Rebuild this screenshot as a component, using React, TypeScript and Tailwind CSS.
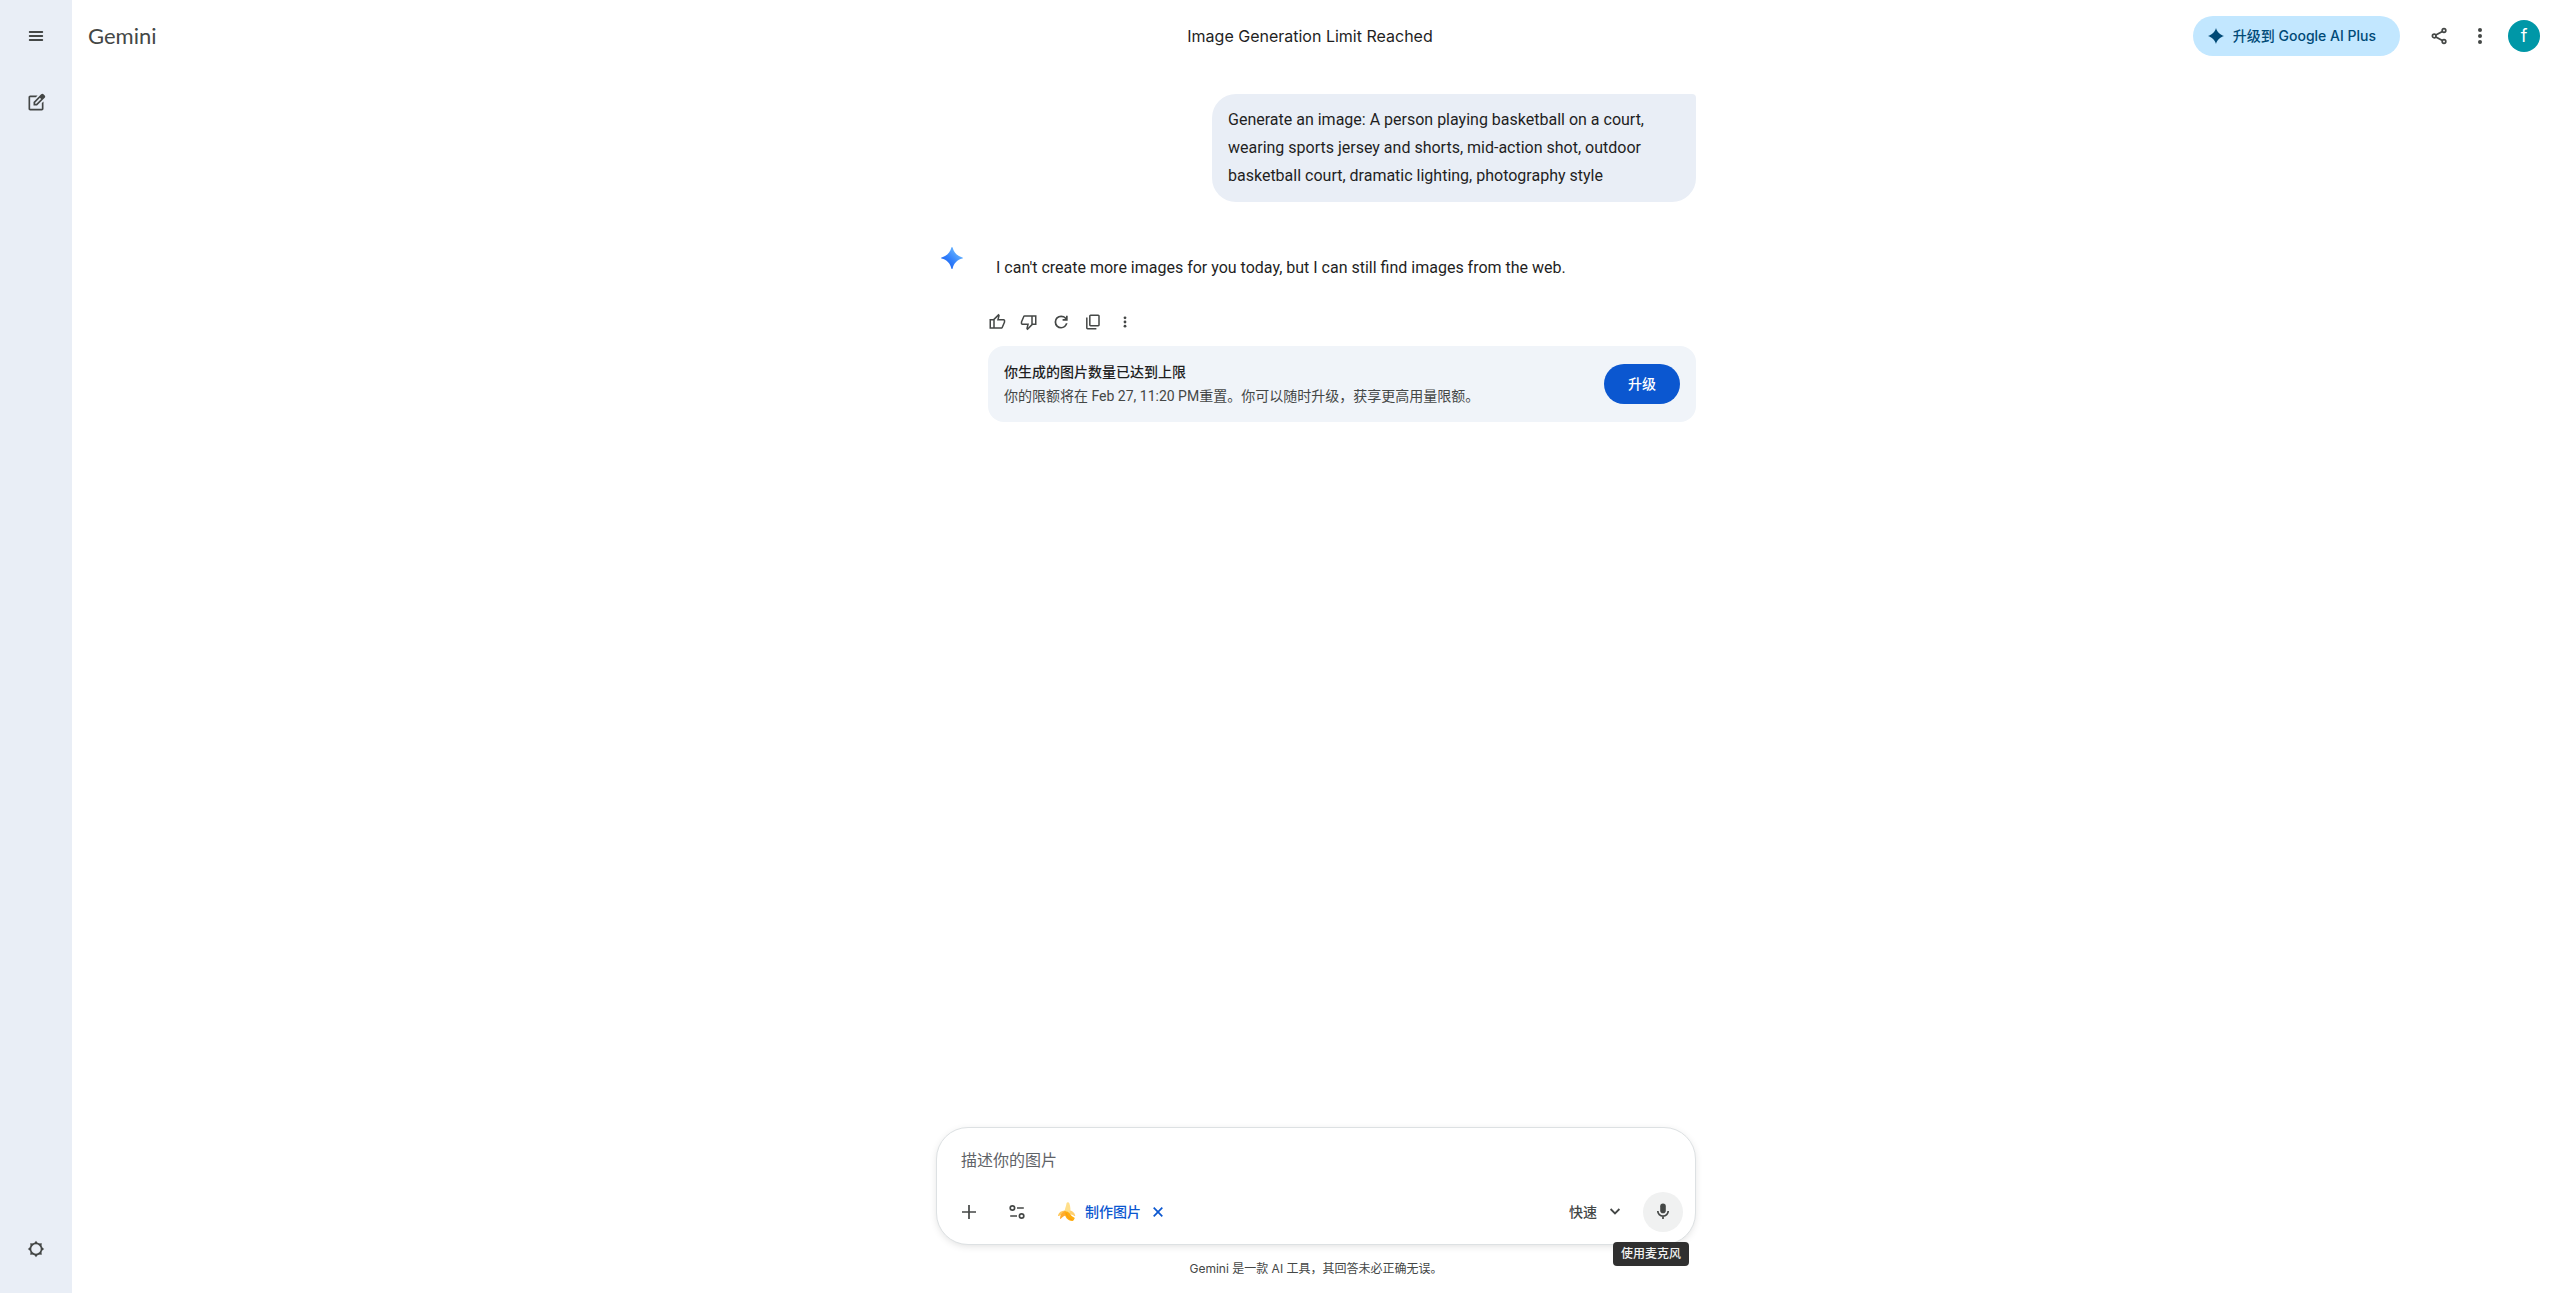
import { useState } from "react";
import type { ReactNode } from "react";

/* ── Icons ── */

function Symbol({ d, className }: { d: string; className: string }) {
  return (
    <svg viewBox="0 -960 960 960" fill="currentColor" className={className} aria-hidden="true">
      <path d={d} />
    </svg>
  );
}

const THUMB_UP =
  "M720-120H280v-520l280-280 50 50q7 7 11.5 19t4.5 23v14l-44 174h258q32 0 56 24t24 56v80q0 7-2 15t-4 15L794-168q-9 20-30 34t-44 14Zm-360-80h360l120-280v-80H480l54-220-174 174v406Zm-80-440v80H160v360h120v80H80v-520h200Z";
const THUMB_DOWN =
  "M240-840h440v520L400-40l-50-50q-7-7-11.5-19t-4.5-23v-14l44-174H120q-32 0-56-24t-24-56v-80q0-7 2-15t4-15l120-282q9-20 30-34t44-14Zm360 80H240L120-480v80h360l-54 220 174-174v-406Zm80 440v-80h120v-360H680v-80h200v520H680Z";
const REFRESH =
  "M486-130q-146 0-248-102T136-480q0-146 102-248t248-102q80 0 146 31t114 85v-106h90v270H566v-90h130q-36-48-90-74t-120-26q-108 0-183 76t-75 184q0 108 75 184t183 76q88 0 157-52t93-138h93q-26 122-122 201t-221 79Z";
const COPY =
  "M350-240q-33 0-56.5-23.5T270-320v-480q0-33 23.5-56.5T350-880h410q33 0 56.5 23.5T840-800v480q0 33-23.5 56.5T760-240H350Zm0-80h410v-480H350v480ZM190-80q-33 0-56.5-23.5T110-160v-560h80v560h470v80H190Z";
const EDIT_SQUARE =
  "M200-120q-33 0-56.5-23.5T120-200v-560q0-33 23.5-56.5T200-840h357l-80 80H200v560h560v-278l80-80v358q0 33-23.5 56.5T760-120H200ZM360-360v-170l367-367q12-12 27-18t30-6q16 0 30.5 6t26.5 18l56 57q11 12 17 26.5t6 29.5q0 15-5.5 29.5T897-728L530-360H360ZM440-440h56l232-232-28-28-29-28-231 231v57Z";

function MenuIcon() {
  return (
    <svg viewBox="0 0 20 20" stroke="currentColor" strokeWidth="1.8" strokeLinecap="round" className="size-5" aria-hidden="true">
      <path d="M3.7 6h12.6M3.7 10h12.6M3.7 14h12.6" />
    </svg>
  );
}

function GearIcon() {
  return (
    <svg viewBox="0 0 20 20" fill="none" className="size-5" aria-hidden="true">
      <circle cx="10" cy="10" r="5.6" stroke="currentColor" strokeWidth="1.7" />
      <path
        fill="currentColor"
        d="M10 1.8l1.8 2.4H8.2zM10 18.2l1.8-2.4H8.2zM1.8 10l2.4-1.8v3.6zM18.2 10l-2.4-1.8v3.6zM4.2 4.2l3 .4-2.6 2.6zM15.8 4.2l-3 .4 2.6 2.6zM4.2 15.8l3-.4-2.6-2.6zM15.8 15.8l-3-.4 2.6-2.6z"
      />
    </svg>
  );
}

function ShareIcon() {
  return (
    <svg viewBox="0 0 20 20" fill="none" stroke="currentColor" strokeWidth="1.7" className="size-5" aria-hidden="true">
      <circle cx="4.2" cy="10" r="1.8" />
      <circle cx="14" cy="4.5" r="1.8" />
      <circle cx="14" cy="15.5" r="1.8" />
      <path d="M5.8 9.1l6.6-3.7M5.8 10.9l6.6 3.7" />
    </svg>
  );
}

function MoreIcon({ className }: { className: string }) {
  return (
    <svg viewBox="0 0 20 20" fill="currentColor" className={className} aria-hidden="true">
      <circle cx="10" cy="4" r="2" />
      <circle cx="10" cy="10" r="2" />
      <circle cx="10" cy="16" r="2" />
    </svg>
  );
}

function SparkIcon({ className }: { className: string }) {
  return (
    <svg viewBox="0 0 22 22" fill="currentColor" className={className} aria-hidden="true">
      <path d="M11 0C12.4 5.2 16.8 9.6 22 11 16.8 12.4 12.4 16.8 11 22 9.6 16.8 5.2 12.4 0 11 5.2 9.6 9.6 5.2 11 0z" />
    </svg>
  );
}

function GeminiSpark() {
  return (
    <svg viewBox="0 0 22 22" className="size-[22px]" aria-hidden="true">
      <defs>
        <linearGradient id="spark" x1="3" y1="18" x2="17" y2="3" gradientUnits="userSpaceOnUse">
          <stop offset="0" stopColor="#1c62f0" />
          <stop offset="0.45" stopColor="#3483fc" />
          <stop offset="1" stopColor="#6bb8ff" />
        </linearGradient>
      </defs>
      <path
        fill="url(#spark)"
        d="M11 0c.3 0 .5.2.6.6 1.3 5.1 4.7 8.5 9.8 9.8.4.1.6.3.6.6s-.2.5-.6.6c-5.1 1.3-8.5 4.7-9.8 9.8-.1.4-.3.6-.6.6s-.5-.2-.6-.6c-1.3-5.1-4.7-8.5-9.8-9.8-.4-.1-.6-.3-.6-.6s.2-.5.6-.6c5.1-1.3 8.5-4.7 9.8-9.8.1-.4.3-.6.6-.6z"
      />
    </svg>
  );
}

function PlusIcon() {
  return (
    <svg viewBox="0 0 20 20" stroke="currentColor" strokeWidth="1.7" className="size-5" aria-hidden="true">
      <path d="M10 3v14M3 10h14" />
    </svg>
  );
}

function TuneIcon() {
  return (
    <svg viewBox="0 0 20 20" fill="none" stroke="currentColor" strokeWidth="1.7" className="size-5" aria-hidden="true">
      <circle cx="5.4" cy="6" r="2.2" />
      <path d="M10 6h6.8M3.2 14H10" />
      <circle cx="14.6" cy="14" r="2.2" />
    </svg>
  );
}

function BananaIcon() {
  return (
    <svg viewBox="0 0 20 20" className="size-5" aria-hidden="true">
      <path d="M9.6 1c.5-.9 2.3-.9 2.7.2 1.2 3.2 1.5 7 .9 11.3l-6-.4c-.2-4.2 2-7.2 2.4-11.1z" fill="#ffdf8a" />
      <path d="M7.9 8.4C4.3 8.5 2 10.3 1 13.2c-.2.7.2 1 .8.7 1.900-1 4-1.400 6.600-1z" fill="#ffc85a" />
      <path d="M8.2 8.8c-3.200 1.500-5 4.200-5.200 7.400 0 .8.600.9 1.100.3 1.300-1.700 3-2.800 5.400-3.300z" fill="#ffab2e" />
      <path d="M12.9 8.4c2.900.5 4.600 2.200 5.300 5 .1.700-.3.900-.9.500-1.400-1-3-1.600-4.900-1.700z" fill="#ffd071" />
      <path d="M7.9 9.2c2.200 0 3.900.8 5 2.500 1.200 1.800 2.300 2.900 4.200 3.800.6.300.7.700.4 1.300l-.9 1.400c-.3.500-.7.700-1.200.7-4.800-.2-8.200-3.800-7.500-9.700z" fill="#ffae0d" />
      <path d="M9.2 11c.8 3.5 2.7 5.7 6 7" stroke="#f7931e" strokeWidth="0.8" fill="none" />
    </svg>
  );
}

function CloseIcon() {
  return (
    <svg viewBox="0 0 18 18" stroke="currentColor" strokeWidth="1.7" className="size-[18px]" aria-hidden="true">
      <path d="M4.7 4.7l8.6 8.6M13.3 4.7l-8.6 8.6" />
    </svg>
  );
}

function ChevronIcon() {
  return (
    <svg viewBox="0 0 20 20" fill="none" stroke="currentColor" strokeWidth="1.8" className="size-5" aria-hidden="true">
      <path d="M5.6 7l4.4 4.4L14.4 7" />
    </svg>
  );
}

function MicIcon() {
  return (
    <svg viewBox="0 0 20 20" fill="none" className="size-5" aria-hidden="true">
      <rect x="7.2" y="1.4" width="5.6" height="9.8" rx="2.8" fill="currentColor" />
      <path d="M4.8 9a5.2 5.2 0 0 0 10.4 0M10 14.2V17" stroke="currentColor" strokeWidth="1.7" />
    </svg>
  );
}

/* ── Shared ── */

function IconButton({ label, className = "", children }: {
  label: string;
  className?: string;
  children: ReactNode;
}) {
  return (
    <button
      type="button"
      aria-label={label}
      className={`size-10 rounded-full flex items-center justify-center shrink-0 text-[#444746] ${className}`}
    >
      {children}
    </button>
  );
}

/* ── Sidebar ── */

function Sidebar() {
  return (
    <nav className="w-18 shrink-0 bg-[#e9eef6] flex flex-col items-center pt-4 pb-6">
      <IconButton label="主菜单">
        <MenuIcon />
      </IconButton>
      <IconButton label="发起新对话" className="mt-[27px]">
        <Symbol d={EDIT_SQUARE} className="size-5" />
      </IconButton>
      <IconButton label="设置" className="mt-auto">
        <GearIcon />
      </IconButton>
    </nav>
  );
}

/* ── Header ── */

function Header() {
  return (
    <header className="h-18 shrink-0 grid grid-cols-[1fr_auto_1fr] items-center pl-2 pr-5">
      <a href="#" className="justify-self-start pl-2 font-[Lato,sans-serif] text-[22px] leading-7 text-[#444746]">Gemini</a>
      <h1 className="text-base text-[#1f1f1f]">Image Generation Limit Reached</h1>
      <div className="justify-self-end flex items-center">
        <button
          type="button"
          className="h-10 mr-5 pl-3.5 pr-6 rounded-full bg-[#c2e7ff] text-[#004a77] text-sm font-medium flex items-center gap-2"
        >
          <span className="w-[18px] flex justify-center">
            <SparkIcon className="size-4" />
          </span>
          升级到 Google AI Plus
        </button>
        <IconButton label="分享">
          <ShareIcon />
        </IconButton>
        <IconButton label="更多">
          <MoreIcon className="size-5" />
        </IconButton>
        <button type="button" aria-label="账号" className="ml-2 size-8 rounded-full bg-[#0097a7] text-white text-lg leading-8">
          f
        </button>
      </div>
    </header>
  );
}

/* ── Conversation ── */

function Conversation() {
  return (
    <div className="w-full max-w-[760px] mx-auto pt-[22px] font-['Roboto','Noto_Sans_CJK_SC',sans-serif]">
      <p className="ml-auto max-w-[484px] px-4 py-3 bg-[#e9eef6] rounded-3xl rounded-tr-sm text-base leading-7 text-[#1f1f1f]">
        Generate an image: A person playing basketball on a court, wearing sports jersey and shorts, mid-action shot, outdoor basketball court, dramatic lighting, photography style
      </p>

      <div className="mt-10 flex gap-5">
        <div className="size-8 shrink-0 flex items-center justify-center">
          <GeminiSpark />
        </div>
        <div className="flex-1 min-w-0">
          <p className="pt-3 px-2 text-base leading-7 text-[#1f1f1f]">
            I can't create more images for you today, but I can still find images from the web.
          </p>
          <div className="mt-6 h-8 flex items-center gap-3.5 text-[#444746]">
            <button type="button" aria-label="答得好"><Symbol d={THUMB_UP} className="size-[18px]" /></button>
            <button type="button" aria-label="答得不好"><Symbol d={THUMB_DOWN} className="size-[18px]" /></button>
            <button type="button" aria-label="重试"><Symbol d={REFRESH} className="size-[18px]" /></button>
            <button type="button" aria-label="复制"><Symbol d={COPY} className="size-[18px]" /></button>
            <button type="button" aria-label="更多选项" className="size-[18px] flex items-center justify-center">
              <MoreIcon className="size-3.5" />
            </button>
          </div>
          <LimitCard />
        </div>
      </div>
    </div>
  );
}

function LimitCard() {
  return (
    <section className="mt-2 h-19 px-4 rounded-2xl bg-[#f0f4f9] flex items-center justify-between">
      <div className="text-sm leading-6">
        <h2 className="font-medium text-[#1f1f1f]">你生成的图片数量已达到上限</h2>
        <p className="text-[#444746]">你的限额将在 Feb 27, 11:20 PM重置。你可以随时升级，获享更高用量限额。</p>
      </div>
      <button type="button" className="h-10 px-6 rounded-full bg-[#0b57d0] text-white text-sm font-medium">
        升级
      </button>
    </section>
  );
}

/* ── Composer ── */

function Composer() {
  const [prompt, setPrompt] = useState("");

  return (
    <div className="w-full max-w-[760px] mx-auto pb-4">
      <div className="px-3 pt-5 pb-3 rounded-4xl border border-[#dde1e3] bg-white shadow-[0_2px_8px_-2px_rgba(0,0,0,0.16)]">
        <textarea
          rows={1}
          aria-label="在此处输入提示"
          placeholder="描述你的图片"
          value={prompt}
          onChange={(e) => setPrompt(e.target.value)}
          className="block w-full h-6 px-3 resize-none text-base leading-6 text-[#1f1f1f] placeholder:text-[#5f6368] focus:outline-none"
        />
        <div className="mt-5 flex items-center">
          <div className="flex items-center gap-2">
            <IconButton label="添加文件">
              <PlusIcon />
            </IconButton>
            <IconButton label="工具">
              <TuneIcon />
            </IconButton>
            <button type="button" className="h-10 px-3 flex items-center gap-2 text-sm font-medium text-[#0b57d0]">
              <BananaIcon />
              制作图片
              <CloseIcon />
            </button>
          </div>
          <button type="button" className="ml-auto h-10 px-2 mr-2.5 flex items-center gap-2 text-sm font-medium text-[#444746]">
            快速
            <ChevronIcon />
          </button>
          <div className="relative">
            <IconButton label="使用麦克风" className="bg-[#f0f1f1]">
              <MicIcon />
            </IconButton>
            <span
              role="tooltip"
              className="absolute top-[50px] -right-1.5 h-6 px-2 rounded bg-[#303030] text-[#f2f2f2] text-xs leading-6 font-medium whitespace-nowrap"
            >
              使用麦克风
            </span>
          </div>
        </div>
      </div>
      <p className="mt-4 text-center text-xs text-[#444746]">Gemini 是一款 AI 工具，其回答未必正确无误。</p>
    </div>
  );
}

export default function App() {
  return (
    <div lang="zh-CN" className="h-screen flex bg-white font-['Inter','Noto_Sans_CJK_SC',sans-serif]">
      <Sidebar />
      <div className="flex-1 min-w-0 flex flex-col">
        <Header />
        <main className="flex-1 min-h-0 flex flex-col">
          <div className="flex-1 min-h-0 overflow-y-auto">
            <Conversation />
          </div>
          <Composer />
        </main>
      </div>
    </div>
  );
}
